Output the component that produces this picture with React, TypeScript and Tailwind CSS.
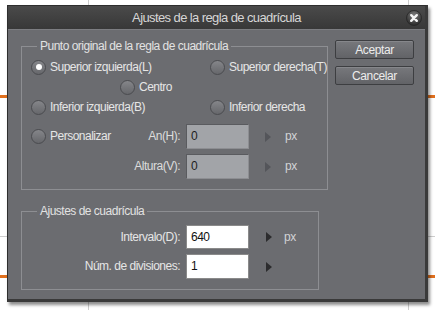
import React from 'react';

const font = "font-['Liberation_Sans',Arial,sans-serif]";

const Radio = ({ checked = false }: { checked?: boolean }) => (
  <span className="flex h-[15px] w-[15px] shrink-0 items-center justify-center rounded-full border border-[#4a4b4f] bg-gradient-to-b from-[#85868a] to-[#66676b]">
    {checked && <span className="h-[6px] w-[6px] rounded-full bg-white" />}
  </span>
);

const Arrow = ({ dim = false }: { dim?: boolean }) => (
  <svg width="6" height="10" viewBox="0 0 6 10" className="shrink-0">
    <polygon points="0,0 6,5 0,10" fill={dim ? '#54555a' : '#2c2c2e'} />
  </svg>
);

const RadioItem = ({ label, checked }: { label: string; checked?: boolean }) => (
  <div className="flex items-center gap-[4px] whitespace-nowrap">
    <Radio checked={checked} />
    <span>{label}</span>
  </div>
);

const Button = ({ children }: { children: React.ReactNode }) => (
  <button className="flex h-[19px] w-[79px] items-center justify-center rounded-[2px] border border-[#3d3e41] bg-gradient-to-b from-[#77787c] to-[#626367] text-[12px] leading-none tracking-[-0.4px] text-[#ececec] shadow-[inset_0_1px_0_#86878b]">
    {children}
  </button>
);

export default function App() {
  return (
    <div className={`relative h-[310px] w-[435px] overflow-hidden bg-white ${font}`}>
      {/* canvas behind the dialog */}
      <div className="absolute left-[88px] top-0 h-full w-px bg-[#cdcdcd]" />
      <div className="absolute left-[408px] top-0 h-full w-px bg-[#cdcdcd]" />
      <div className="absolute left-0 top-[236px] h-px w-full bg-[#cdcdcd]" />
      <div className="absolute left-0 top-[95px] h-[3px] w-full bg-[#e0701e]" />
      <div className="absolute left-0 top-[275px] h-[3px] w-full bg-[#e0701e]" />

      <div className="relative ml-[7px] mt-[5px] flex h-[297px] w-[421px] flex-col border-l border-t border-r-[3px] border-b-[3px] border-l-[#2e2e2e] border-t-[#2e2e2e] border-r-[#3a3a3a] border-b-[#3a3a3a] shadow-[2px_3px_3px_rgba(0,0,0,0.45)]">
        {/* title bar */}
        <div className="relative flex h-[23px] shrink-0 items-center justify-center bg-gradient-to-b from-[#4a4a4a] to-[#383838]">
          <span className="text-[13px] tracking-[-0.6px] text-[#d6d6d6]">Ajustes de la regla de cuadrícula</span>
          <svg width="16" height="16" viewBox="0 0 16 16" className="absolute right-[3px] top-[4px]">
            <defs>
              <radialGradient id="cb" cx="50%" cy="30%" r="70%">
                <stop offset="0%" stopColor="#7a7a7a" />
                <stop offset="100%" stopColor="#2a2a2a" />
              </radialGradient>
            </defs>
            <circle cx="8" cy="8" r="7.5" fill="url(#cb)" stroke="#262626" strokeWidth="0.8" />
            <path d="M5.2 5.2 L10.8 10.8 M10.8 5.2 L5.2 10.8" stroke="#f4f4f4" strokeWidth="2.4" strokeLinecap="round" />
          </svg>
        </div>

        {/* body */}
        <div className="flex flex-1 gap-[16px] bg-[#6b6c70] pl-[13px] pr-[11px] pt-[10px] text-[12px] leading-[15px] tracking-[-0.5px] text-[#e6e6e6] shadow-[inset_0_1px_0_#7c7d81]">
          <div className="flex w-[298px] flex-col gap-[14px]">
            <fieldset className="border border-[#8d8e92] pb-[10px] pl-[9px]">
              <legend className="ml-[6px] px-[3px] text-[#e2e2e2]">Punto original de la regla de cuadrícula</legend>
              <div className="mt-[3px] flex h-[20px] items-center">
                <div className="w-[179px]">
                  <RadioItem label="Superior izquierda(L)" checked />
                </div>
                <RadioItem label="Superior derecha(T)" />
              </div>
              <div className="flex h-[20px] items-center pl-[89px]">
                <RadioItem label="Centro" />
              </div>
              <div className="flex h-[20px] items-center">
                <div className="w-[179px]">
                  <RadioItem label="Inferior izquierda(B)" />
                </div>
                <RadioItem label="Inferior derecha" />
              </div>
              <div className="mt-[7px] flex h-[25px] items-center">
                <div className="flex w-[149px] items-center">
                  <RadioItem label="Personalizar" />
                  <span className="ml-auto text-[#dcdcdc]">An(H):</span>
                </div>
                <div className="ml-[6px] flex h-[25px] w-[63px] items-center border border-[#5a5b5f] border-b-[#8d8e92] border-r-[#8d8e92] bg-[#a2a4a8] pl-[4px] text-[#1e1e1e]">0</div>
                <div className="ml-[16px]"><Arrow dim /></div>
                <span className="ml-[14px] text-[#d2d3d6]">px</span>
              </div>
              <div className="mt-[5px] flex h-[25px] items-center">
                <span className="w-[149px] text-right text-[#dcdcdc]">Altura(V):</span>
                <div className="ml-[6px] flex h-[25px] w-[63px] items-center border border-[#5a5b5f] border-b-[#8d8e92] border-r-[#8d8e92] bg-[#a2a4a8] pl-[4px] text-[#1e1e1e]">0</div>
                <div className="ml-[16px]"><Arrow dim /></div>
                <span className="ml-[14px] text-[#d2d3d6]">px</span>
              </div>
            </fieldset>

            <fieldset className="border border-[#8d8e92] pb-[10px] pl-[9px]">
              <legend className="ml-[6px] px-[3px] text-[#e2e2e2]">Ajustes de cuadrícula</legend>
              <div className="mt-[6px] flex h-[24px] items-center">
                <span className="w-[149px] text-right">Intervalo(D):</span>
                <div className="ml-[6px] flex h-[24px] w-[63px] items-center border border-[#8a8a8a] bg-white pl-[4px] text-[#111]">640</div>
                <div className="ml-[17px]"><Arrow /></div>
                <span className="ml-[12px] text-[#d2d3d6]">px</span>
              </div>
              <div className="mt-[5px] flex h-[25px] items-center">
                <span className="w-[149px] text-right">Núm. de divisiones:</span>
                <div className="ml-[6px] flex h-[25px] w-[63px] items-center border border-[#8a8a8a] bg-white pl-[4px] text-[#111]">1</div>
                <div className="ml-[17px]"><Arrow /></div>
              </div>
            </fieldset>
          </div>

          <div className="mt-[1px] flex flex-col gap-[7px]">
            <Button>Aceptar</Button>
            <Button>Cancelar</Button>
          </div>
        </div>
      </div>
    </div>
  );
}
